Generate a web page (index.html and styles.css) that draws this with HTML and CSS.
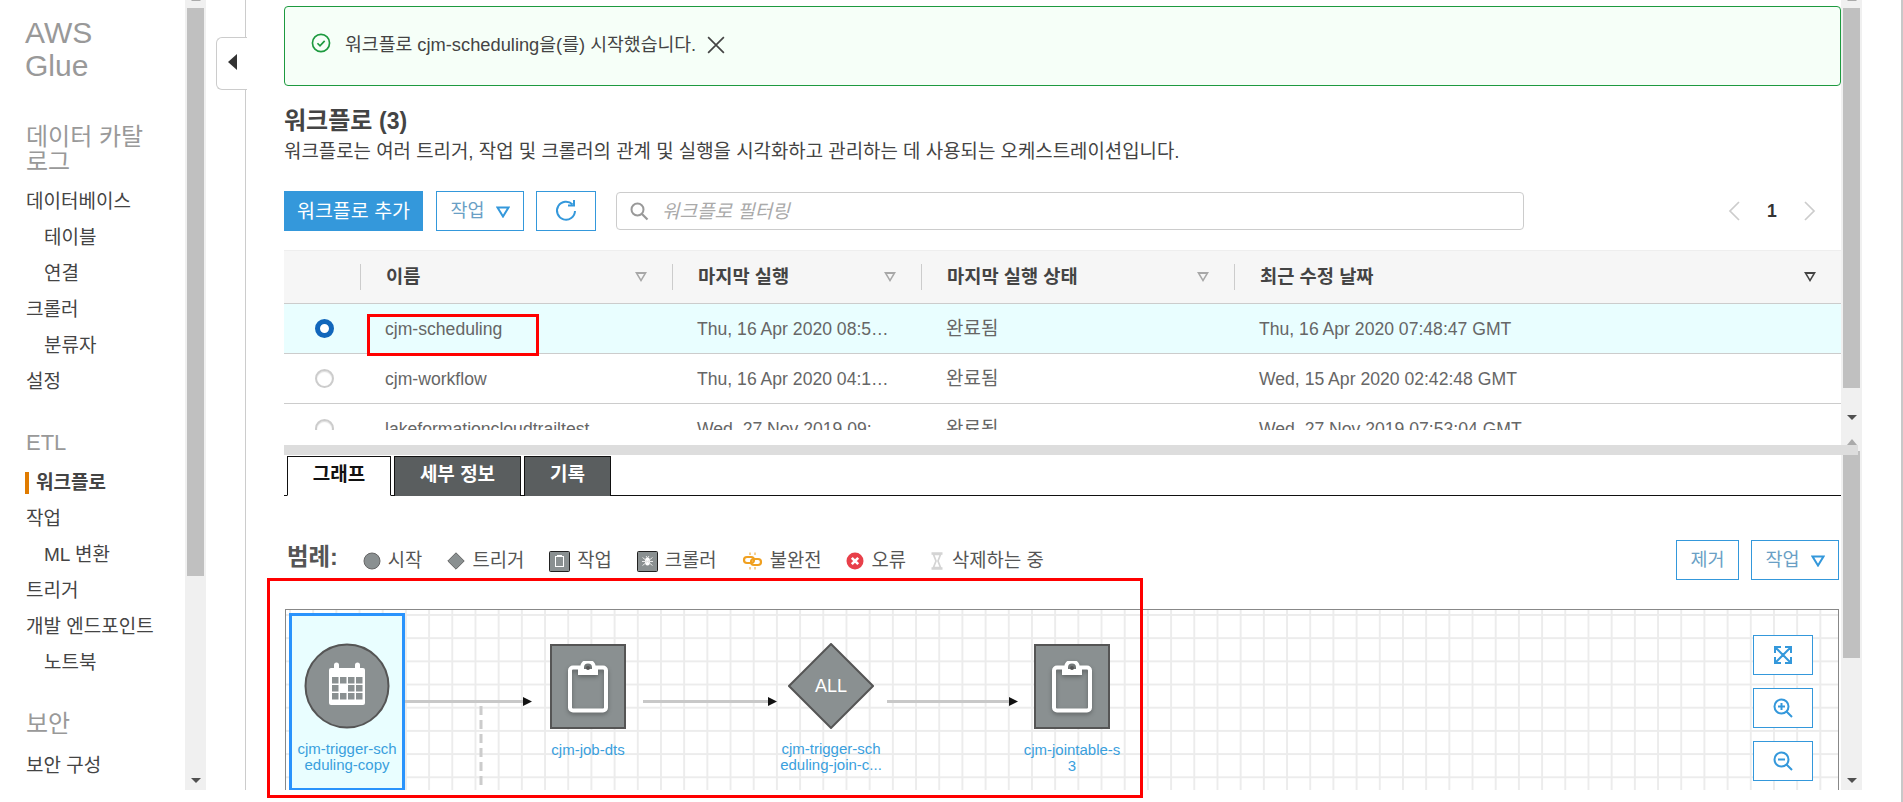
FILE: index.html
```html
<!DOCTYPE html>
<html lang="ko">
<head>
    <meta charset="UTF-8">
    <title>AWS Glue</title>
    <link rel="stylesheet" href="styles.css">
</head>
<body>
    <!-- Left navigation -->
    <nav class="nav">
        <h1 class="nav-title">AWS<br>Glue</h1>
        <h2 class="nav-group nav-group-first">데이터 카탈로그</h2>
        <a class="nav-link">데이터베이스</a>
        <a class="nav-link nav-sub">테이블</a>
        <a class="nav-link nav-sub">연결</a>
        <a class="nav-link">크롤러</a>
        <a class="nav-link nav-sub">분류자</a>
        <a class="nav-link">설정</a>
        <h2 class="nav-group nav-group-etl">ETL</h2>
        <a class="nav-link nav-active">워크플로</a>
        <a class="nav-link">작업</a>
        <a class="nav-link nav-sub">ML 변환</a>
        <a class="nav-link">트리거</a>
        <a class="nav-link">개발 엔드포인트</a>
        <a class="nav-link nav-sub">노트북</a>
        <h2 class="nav-group nav-group-sec">보안</h2>
        <a class="nav-link">보안 구성</a>
    </nav>
    <div class="scrollbar nav-scroll">
        <span class="arrow-up"></span>
        <div class="thumb"></div>
        <span class="arrow-down"></span>
    </div>

    <main class="main">
        <button class="nav-toggle"><span class="toggle-arrow"></span></button>

        <!-- Workflow list pane -->
        <section class="pane pane-top">
            <div class="pane-body">
                <div class="flash">
                    <svg class="flash-icon" viewBox="0 0 18 18" width="20" height="20"><circle cx="9" cy="9" r="7.7" fill="none" stroke="#1d9a3f" stroke-width="1.5"/><path d="M5.8 9.2l2.3 2.3 4.2-4.4" fill="none" stroke="#1d9a3f" stroke-width="1.5"/></svg>
                    <span class="flash-text">워크플로 cjm-scheduling을(를) 시작했습니다.</span>
                    <svg class="flash-close" viewBox="0 0 16 16" width="18" height="18"><path d="M1 1l14 14M15 1L1 15" stroke="#444" stroke-width="1.5" fill="none"/></svg>
                </div>

                <h2 class="page-title">워크플로 <span class="count">(3)</span></h2>
                <p class="page-desc">워크플로는 여러 트리거, 작업 및 크롤러의 관계 및 실행을 시각화하고 관리하는 데 사용되는 오케스트레이션입니다.</p>

                <div class="toolbar">
                    <button class="btn btn-primary"><span class="btn-text">워크플로 추가</span></button>
                    <button class="btn btn-action"><span class="btn-text">작업</span> <svg class="caret" viewBox="0 0 14 12" width="14" height="12"><path d="M1.5 1.5h11L7 10.5z" fill="none" stroke="#3498db" stroke-width="2"/></svg></button>
                    <button class="btn btn-refresh">
                        <svg viewBox="0 0 24 24" width="24" height="24"><path d="M18.5 5.5A9 9 0 1 0 21 12" fill="none" stroke="#3498db" stroke-width="2"/><path d="M14 6.5h6V1" fill="none" stroke="#3498db" stroke-width="2"/></svg>
                    </button>
                    <div class="filter">
                        <svg viewBox="0 0 20 20" width="20" height="20"><circle cx="8.5" cy="8.5" r="6" fill="none" stroke="#999" stroke-width="2"/><path d="M13 13l5.5 5.5" stroke="#999" stroke-width="2.2"/></svg>
                        <span class="filter-text">워크플로 필터링</span>
                    </div>
                    <div class="pager">
                        <svg viewBox="0 0 12 20" width="12" height="20"><path d="M11 1L2 10l9 9" fill="none" stroke="#ccc" stroke-width="1.7"/></svg>
                        <b>1</b>
                        <svg viewBox="0 0 12 20" width="12" height="20"><path d="M1 1l9 9-9 9" fill="none" stroke="#ccc" stroke-width="1.7"/></svg>
                    </div>
                </div>

                <div class="table">
                    <div class="row row-head">
                        <div class="cell cell-radio"></div>
                        <div class="cell cell-name"><span>이름</span><i class="sort"></i></div>
                        <div class="cell cell-run"><span>마지막 실행</span><i class="sort"></i></div>
                        <div class="cell cell-status"><span>마지막 실행 상태</span><i class="sort"></i></div>
                        <div class="cell cell-date"><span>최근 수정 날짜</span><i class="sort sort-on"></i></div>
                    </div>
                    <div class="row row-selected">
                        <div class="cell cell-radio"><i class="radio radio-on"></i></div>
                        <div class="cell cell-name">cjm-scheduling</div>
                        <div class="cell cell-run">Thu, 16 Apr 2020 08:5…</div>
                        <div class="cell cell-status">완료됨</div>
                        <div class="cell cell-date">Thu, 16 Apr 2020 07:48:47 GMT</div>
                    </div>
                    <div class="row">
                        <div class="cell cell-radio"><i class="radio"></i></div>
                        <div class="cell cell-name">cjm-workflow</div>
                        <div class="cell cell-run">Thu, 16 Apr 2020 04:1…</div>
                        <div class="cell cell-status">완료됨</div>
                        <div class="cell cell-date">Wed, 15 Apr 2020 02:42:48 GMT</div>
                    </div>
                    <div class="row">
                        <div class="cell cell-radio"><i class="radio"></i></div>
                        <div class="cell cell-name">lakeformationcloudtrailtest</div>
                        <div class="cell cell-run">Wed, 27 Nov 2019 09:…</div>
                        <div class="cell cell-status">완료됨</div>
                        <div class="cell cell-date">Wed, 27 Nov 2019 07:53:04 GMT</div>
                    </div>
                </div>
            </div>
            <div class="scrollbar pane-scroll-top">
                <span class="arrow-up"></span>
                <div class="thumb"></div>
                <span class="arrow-down"></span>
            </div>
        </section>

        <div class="divider"></div>

        <!-- Workflow detail pane -->
        <section class="pane pane-bottom">
            <div class="pane-body">
                <div class="tabs">
                    <a class="tab tab-active">그래프</a>
                    <a class="tab tab-wide">세부 정보</a>
                    <a class="tab tab-narrow">기록</a>
                </div>

                <div class="legend-bar">
                    <b class="legend-title">범례:</b>
                    <span class="legend-item"><svg viewBox="0 0 18 18" width="18" height="18"><circle cx="9" cy="9" r="8" fill="#8a9091" stroke="#666"/></svg>시작</span>
                    <span class="legend-item"><svg viewBox="0 0 18 18" width="18" height="18"><path d="M9 .8L17.2 9 9 17.2.8 9z" fill="#8a9091" stroke="#666"/></svg>트리거</span>
                    <span class="legend-item"><svg viewBox="0 0 21 21" width="21" height="21"><rect x=".5" y=".5" width="20" height="20" rx="1" fill="#8a9091" stroke="#222"/><rect x="6.5" y="5.5" width="8" height="10" fill="none" stroke="#fff"/><path d="M8 5h5" stroke="#fff" stroke-width="2"/></svg>작업</span>
                    <span class="legend-item"><svg viewBox="0 0 21 21" width="21" height="21"><rect x=".5" y=".5" width="20" height="20" rx="1" fill="#8a9091" stroke="#222"/><ellipse cx="10.5" cy="10.5" rx="2.6" ry="4" fill="#fff"/><path d="M5.5 6.5l10 8M15.5 6.5l-10 8M5 10.5h11M9 5l1.5 2 1.5-2" fill="none" stroke="#e8e8e8"/></svg>크롤러</span>
                    <span class="legend-item"><svg viewBox="0 0 21 18" width="21" height="18"><rect x="2" y="5" width="10" height="6" rx="3" fill="none" stroke="#f0a020" stroke-width="2.2"/><rect x="9" y="7" width="10" height="6" rx="3" fill="none" stroke="#f0a020" stroke-width="2.2"/><path d="M8 .5V3M13 .5V3M8 15v2.5M13 15v2.5" stroke="#f0a020"/></svg>불완전</span>
                    <span class="legend-item"><svg viewBox="0 0 18 18" width="18" height="18"><circle cx="9" cy="9" r="8.5" fill="#e8404a"/><path d="M5.8 5.8l6.4 6.4M12.2 5.8l-6.4 6.4" stroke="#fff" stroke-width="2.6"/></svg>오류</span>
                    <span class="legend-item legend-last"><svg viewBox="0 0 12 18" width="12" height="18"><path d="M.5 1.5h11M.5 16.5h11" stroke="#d4d4d4" stroke-width="2.5"/><path d="M2.5 2.5h7L7 9l2.5 6.5h-7L5 9z" fill="none" stroke="#d4d4d4" stroke-width="1.7"/></svg>삭제하는 중</span>
                    <div class="legend-actions">
                        <button class="btn btn-remove"><span class="btn-text">제거</span></button>
                        <button class="btn btn-action btn-action-right"><span class="btn-text">작업</span> <svg class="caret" viewBox="0 0 14 12" width="14" height="12"><path d="M1.5 1.5h11L7 10.5z" fill="none" stroke="#3498db" stroke-width="2"/></svg></button>
                    </div>
                </div>

                <!-- Diagram: nodes sit on a free canvas -->
                <div class="graph">
                    <svg class="edges" width="1553" height="181" viewBox="0 0 1553 181">
                        <path class="edge" d="M118 91.5H238M357 91.5H483M601 91.5H724"/>
                        <path class="edge-dash" d="M195 96V181"/>
                        <path d="M237 87l9 4.5-9 4.5zM482 87l9 4.5-9 4.5zM723 87l9 4.5-9 4.5z" fill="#111"/>
                    </svg>

                    <div class="node node-selected node-start">
                        <svg viewBox="0 0 86 86" width="86" height="86">
                            <circle cx="43" cy="43" r="41.5" fill="#8a9091" stroke="#555" stroke-width="2"/>
                            <path fill="#fff" d="M25 27a2 2 0 0 1 2-2h3v-3a2.5 2.5 0 0 1 5 0v3h16v-3a2.5 2.5 0 0 1 5 0v3h3a2 2 0 0 1 2 2v33a2 2 0 0 1-2 2H27a2 2 0 0 1-2-2z"/>
                            <path fill="#8a9091" d="M28 34h6.5v6.5H28zM36 34h6.5v6.5H36zM44 34h6.5v6.5H44zM52 34h6.5v6.5H52zM28 42h6.5v6.5H28zM44 42h6.5v6.5H44zM52 42h6.5v6.5H52zM28 50h6.5v6.5H28zM36 50h6.5v6.5H36zM44 50h6.5v6.5H44zM52 50h6.5v6.5H52z"/>
                        </svg>
                        <a class="node-label">cjm-trigger-sch<br>eduling-copy</a>
                    </div>

                    <div class="node node-job1">
                        <div class="job-box">
                            <svg viewBox="0 0 42 52" width="42" height="52"><path d="M6 6.5h9a6 6 0 0 1 12 0h9a3 3 0 0 1 3 3v37a3 3 0 0 1-3 3H6a3 3 0 0 1-3-3v-37a3 3 0 0 1 3-3z" fill="none" stroke="#fff" stroke-width="4"/><path d="M11 8h20v6H11z" fill="#fff"/><circle cx="21" cy="7" r="2" fill="#555"/></svg>
                        </div>
                        <a class="node-label">cjm-job-dts</a>
                    </div>

                    <div class="node node-all">
                        <svg viewBox="0 0 86 86" width="86" height="86"><path d="M43 1l42 42-42 42L1 43z" fill="#8a9091" stroke="#555" stroke-width="2"/><text x="43" y="49" text-anchor="middle" class="all-text">ALL</text></svg>
                        <a class="node-label">cjm-trigger-sch<br>eduling-join-c...</a>
                    </div>

                    <div class="node node-job2">
                        <div class="job-box">
                            <svg viewBox="0 0 42 52" width="42" height="52"><path d="M6 6.5h9a6 6 0 0 1 12 0h9a3 3 0 0 1 3 3v37a3 3 0 0 1-3 3H6a3 3 0 0 1-3-3v-37a3 3 0 0 1 3-3z" fill="none" stroke="#fff" stroke-width="4"/><path d="M11 8h20v6H11z" fill="#fff"/><circle cx="21" cy="7" r="2" fill="#555"/></svg>
                        </div>
                        <a class="node-label">cjm-jointable-s<br>3</a>
                    </div>

                    <div class="zoom-tools">
                        <button class="btn btn-zoom"><svg viewBox="0 0 18 18" width="18" height="18"><path d="M2 2l14 14M16 2L2 16M1 7V1h6M11 1h6v6M1 11v6h6M17 11v6h-6" fill="none" stroke="#3498db" stroke-width="2"/></svg></button>
                        <button class="btn btn-zoom"><svg viewBox="0 0 20 20" width="20" height="20"><circle cx="8.5" cy="8.5" r="7" fill="none" stroke="#3498db" stroke-width="2"/><path d="M13.5 13.5L19 19M5 8.5h7M8.5 5v7" stroke="#3498db" stroke-width="2"/></svg></button>
                        <button class="btn btn-zoom"><svg viewBox="0 0 20 20" width="20" height="20"><circle cx="8.5" cy="8.5" r="7" fill="none" stroke="#3498db" stroke-width="2"/><path d="M13.5 13.5L19 19M5 8.5h7" stroke="#3498db" stroke-width="2"/></svg></button>
                    </div>
                </div>
            </div>
            <div class="scrollbar pane-scroll-bottom">
                <span class="arrow-up"></span>
                <div class="thumb"></div>
                <span class="arrow-down"></span>
            </div>
        </section>

        <!-- Red annotation boxes drawn over the screenshot -->
        <div class="mark mark-row"></div>
        <div class="mark mark-graph"></div>
    </main>
    <div class="page-edge"></div>
</body>
</html>
```

FILE: styles.css
```css
/* Reset and global styles */
* {
    margin: 0;
    padding: 0;
    box-sizing: border-box;
}

body {
    font-family: "Liberation Sans", "Noto Sans CJK KR", sans-serif;
    background: #fff;
    color: #444;
    width: 1903px;
    height: 802px;
    overflow: hidden;
    display: flex;
    align-items: flex-start;
}

button {
    font-family: inherit;
}

/* Left navigation */
.nav {
    width: 185px;
    height: 790px;
    padding: 16px 0 0 26px;
    overflow: hidden;
    flex-shrink: 0;
}

.nav-title {
    font-size: 30px;
    line-height: 33px;
    font-weight: 400;
    color: #999;
    margin-left: -1px;
}

.nav-group {
    font-size: 24px;
    line-height: 25px;
    font-weight: 400;
    color: #999;
    width: 130px;
}

.nav-group-first {
    margin-top: 42px;
    margin-bottom: 10px;
}

.nav-group-etl {
    font-size: 22px;
    margin-top: 30px;
    margin-bottom: 17px;
}

.nav-group-sec {
    margin-top: 30px;
    margin-bottom: 12px;
}

.nav-link {
    display: block;
    font-size: 19px;
    line-height: 36px;
    color: #444;
}

.nav-sub {
    padding-left: 18px;
}

.nav-active {
    font-weight: 700;
    line-height: 22px;
    margin: 7px 0 7px -1px;
    padding-left: 7px;
    border-left: 4px solid #e07b00;
}

/* Custom scrollbars */
.scrollbar {
    background: #f0f0f0;
    display: flex;
    flex-direction: column;
    align-items: center;
    flex-shrink: 0;
    position: relative;
    overflow: hidden;
}

.scrollbar .thumb {
    width: 17px;
    background: #c0c0c0;
}

.arrow-up,
.arrow-down {
    position: absolute;
    width: 0;
    height: 0;
    border-left: 5px solid transparent;
    border-right: 5px solid transparent;
}

.arrow-up {
    top: -4px;
    border-bottom: 5px solid #aaa;
}

.arrow-down {
    bottom: 7px;
    border-top: 5px solid #505050;
}

.nav-scroll {
    width: 21px;
    height: 790px;
    padding-top: 8px;
}

.nav-scroll .thumb {
    height: 568px;
}

/* Main area */
.main {
    position: relative;
    width: 1655px;
    height: 790px;
    margin-left: 39px;
    border-left: 1px solid #ccc;
    padding-left: 38px;
    flex-shrink: 0;
}

.nav-toggle {
    position: absolute;
    left: -30px;
    top: 37px;
    width: 31px;
    height: 53px;
    background: #fff;
    border: 1px solid #ccc;
    border-right: none;
    border-radius: 6px 0 0 6px;
    display: flex;
    align-items: center;
    justify-content: center;
    padding-bottom: 3px;
}

.toggle-arrow {
    width: 0;
    height: 0;
    border-top: 8px solid transparent;
    border-bottom: 8px solid transparent;
    border-right: 9px solid #333;
}

.pane {
    display: flex;
}

.pane-top {
    height: 445px;
}

.pane-bottom {
    height: 345px;
}

.pane-body {
    width: 1557px;
    flex-shrink: 0;
}

.pane-scroll-top,
.pane-scroll-bottom {
    width: 21px;
}

.pane-scroll-top {
    padding-top: 8px;
}

.pane-scroll-top .thumb {
    height: 380px;
}

.pane-scroll-top .arrow-down {
    bottom: 25px;
}

.pane-scroll-bottom {
    margin-top: -15px;
    height: 360px;
    padding-top: 21px;
}

.pane-scroll-bottom .arrow-up {
    top: 9px;
    border-bottom-width: 6px;
}

.pane-scroll-bottom .thumb {
    height: 207px;
}

.divider {
    position: absolute;
    left: 38px;
    top: 445px;
    width: 1574px;
    height: 10px;
    background: #ddd;
    z-index: 2;
}

/* Flash message */
.flash {
    margin-top: 6px;
    height: 80px;
    background: #f6fff8;
    border: 1px solid #1d9a3f;
    border-radius: 4px;
    padding: 0 0 6px 26px;
    display: flex;
    align-items: center;
    gap: 14px;
    font-size: 18.3px;
    color: #444;
}

.flash-close {
    margin-left: -3px;
    margin-top: 4px;
}

.page-title {
    margin-top: 22px;
    font-size: 24px;
    line-height: 26px;
    font-weight: 700;
    color: #444;
}

.count {
    font-size: 23px;
}

.page-desc {
    margin-top: 6px;
    font-size: 18.9px;
    line-height: 24px;
    color: #444;
    white-space: nowrap;
}

/* Toolbar */
.toolbar {
    margin-top: 27px;
    height: 40px;
    display: flex;
    align-items: center;
}

.btn {
    height: 40px;
    background: #fff;
    border: 1px solid #3498db;
    color: #3498db;
    font-size: 18.5px;
    display: inline-flex;
    align-items: center;
    justify-content: center;
}

.btn-text {
    margin-top: -4px;
}

.btn-primary {
    width: 139px;
    background: #3498db;
    color: #fff;
    font-size: 19.5px;
}

.btn-action {
    width: 88px;
    margin-left: 13px;
    gap: 9px;
    color: #6a9fc5;
}

.caret {
    margin-left: 2px;
    margin-top: 2px;
}

.btn-refresh {
    width: 60px;
    margin-left: 12px;
}

.filter {
    margin-left: 20px;
    width: 908px;
    height: 38px;
    border: 1px solid #ccc;
    border-radius: 4px;
    display: flex;
    align-items: center;
    padding-left: 12px;
    gap: 13px;
}

.filter-text {
    font-style: italic;
    font-size: 19px;
    color: #aaa;
    margin-top: -4px;
}

.pager {
    margin-left: 204px;
    display: flex;
    align-items: center;
    gap: 27px;
    font-size: 17.6px;
    color: #333;
}

/* Workflow table */
.table {
    margin-top: 19px;
    height: 180px;
    overflow: hidden;
}

.row {
    display: flex;
    height: 50px;
    border-bottom: 1px solid #ccc;
    align-items: center;
    font-size: 17.6px;
    color: #666;
}

.row-head {
    height: 54px;
    background: #f6f6f6;
    border-top: 1px solid #eee;
    color: #444;
    font-size: 18.7px;
    font-weight: 700;
}

.row-selected {
    background: #e9feff;
}

.cell {
    position: relative;
    height: 26px;
    line-height: 24px;
    display: flex;
    align-items: center;
    white-space: nowrap;
}

.row-head .cell + .cell {
    border-left: 1px solid #ccc;
}

.row-head .cell span {
    margin-left: 25px;
}

.row:not(.row-head) .cell + .cell {
    padding-left: 25px;
}

.row:not(.row-head) .cell-status {
    font-size: 19px;
}

.cell-radio {
    width: 76px;
    justify-content: center;
    padding-left: 4px;
}

.cell-name {
    width: 312px;
}

.cell-run {
    width: 249px;
}

.cell-status {
    width: 313px;
}

.cell-date {
    flex: 1;
}

.row:not(.row-head) .cell-run {
    padding-left: 22px;
}

.sort {
    position: absolute;
    right: 25px;
    top: 8px;
    width: 0;
    height: 0;
    border-left: 6px solid transparent;
    border-right: 6px solid transparent;
    border-top: 10px solid #a8a8a8;
}

.sort::after {
    content: "";
    position: absolute;
    left: -3px;
    top: -8px;
    width: 0;
    height: 0;
    border-left: 3px solid transparent;
    border-right: 3px solid transparent;
    border-top: 5px solid #f6f6f6;
}

.sort-on {
    border-top-color: #444;
}

.radio {
    width: 19px;
    height: 19px;
    border-radius: 50%;
    border: 2px solid #ccc;
    background: #fff;
    box-shadow: inset 0 1px 1px #ddd;
}

.radio-on {
    border: 5px solid #1166bb;
    box-shadow: none;
}

/* Tabs */
.tabs {
    height: 51px;
    padding: 11px 0 0 3px;
    display: flex;
    gap: 3px;
    border-bottom: 1px solid #111;
}

.tab {
    height: 40px;
    line-height: 36px;
    text-align: center;
    font-size: 19px;
    font-weight: 700;
    color: #fff;
    background: #5a5e5f;
    border: 1px solid #111;
    border-bottom: none;
}

.tab-active {
    width: 104px;
    background: #fff;
    color: #111;
    border-bottom: 1px solid #fff;
}

.tab-wide {
    width: 127px;
}

.tab-narrow {
    width: 87px;
}

/* Legend */
.legend-bar {
    height: 113px;
    padding: 53px 2px 0 3px;
    display: flex;
    align-items: flex-start;
    position: relative;
    font-size: 18.8px;
    color: #555;
}

.legend-title {
    font-size: 23.4px;
    line-height: 24px;
    margin-top: -4px;
    margin-right: 25px;
}

.legend-item {
    display: flex;
    align-items: center;
    gap: 7px;
    margin-right: 25px;
    line-height: 24px;
}

.legend-last {
    gap: 9px;
}

.legend-actions {
    position: absolute;
    right: 2px;
    top: 44px;
    display: flex;
    gap: 12px;
}

.btn-remove {
    width: 63px;
    color: #6a9fc5;
}

.btn-action-right {
    margin-left: 0;
}

/* Graph canvas */
.graph {
    position: relative;
    margin-left: 1px;
    margin-right: 2px;
    height: 181px;
    overflow: hidden;
    border: 1px solid #888;
    border-bottom: none;
    background-color: #fff;
    background-image:
        linear-gradient(#ececec 2px, transparent 2px),
        linear-gradient(90deg, #ececec 2px, transparent 2px);
    background-size: 23.2px 23.2px;
    background-position: 3px 4px;
}

.edges {
    position: absolute;
    left: 0;
    top: 0;
}

.edge {
    fill: none;
    stroke: #c8c8c8;
    stroke-width: 3;
}

.edge-dash {
    fill: none;
    stroke: #ccc;
    stroke-width: 3;
    stroke-dasharray: 9 5;
}

.node {
    position: absolute;
    top: 0;
    display: flex;
    flex-direction: column;
    align-items: center;
}

.node-label {
    font-size: 15px;
    line-height: 16px;
    color: #3aa0dd;
    text-align: center;
    white-space: nowrap;
}

.node-start {
    left: 3px;
    top: 3px;
    width: 116px;
    height: 178px;
    padding-top: 27px;
    border: 3px solid #2a93fc;
    background: #e9feff;
}

.node-start .node-label,
.node-all .node-label {
    margin-top: 12px;
}

.node-job1,
.node-job2,
.node-all {
    top: 33px;
    width: 120px;
}

.node-job1 {
    left: 242px;
}

.node-all {
    left: 485px;
    top: 33px;
}

.node-job2 {
    left: 726px;
}

.job-box {
    width: 76px;
    height: 85px;
    background: #8a9091;
    border: 2px solid #555;
    display: flex;
    align-items: center;
    justify-content: center;
    margin-bottom: 13px;
    margin-top: 1px;
}

.job-box svg {
    filter: drop-shadow(0 2px 2px rgba(0, 0, 0, 0.3));
}

.all-text {
    font-family: "Liberation Sans", sans-serif;
    font-size: 18px;
    fill: #fff;
}

.zoom-tools {
    position: absolute;
    right: 25px;
    top: 25px;
    display: flex;
    flex-direction: column;
    gap: 13px;
}

.btn-zoom {
    width: 60px;
}

/* Annotation boxes */
.mark {
    position: absolute;
    border: 3px solid #f00;
    pointer-events: none;
    z-index: 3;
}

.mark-row {
    left: 121px;
    top: 314px;
    width: 172px;
    height: 42px;
}

.mark-graph {
    left: 21px;
    top: 578px;
    width: 876px;
    height: 220px;
}

.page-edge {
    position: absolute;
    right: 0;
    top: 0;
    width: 2px;
    height: 802px;
    background: #c8c8c8;
}
```
